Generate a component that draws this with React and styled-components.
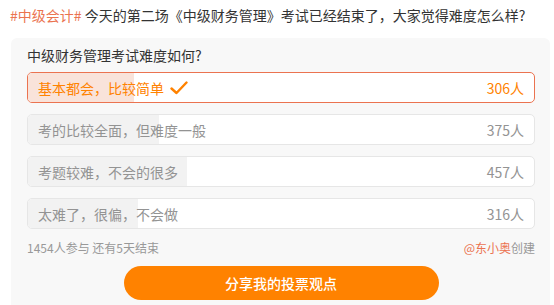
import React from 'react';
import styled, { createGlobalStyle } from 'styled-components';

const GlobalStyle = createGlobalStyle`
  html, body {
    margin: 0;
    padding: 0;
    background: #fff;
    font-family: "Noto Sans CJK SC", "Noto Sans", sans-serif;
  }
`;

const Page = styled.div`
  width: 554px;
  height: 305px;
  overflow: hidden;
  box-sizing: border-box;
  padding: 5px 0 0 10px;
`;

const Title = styled.p`
  margin: 0;
  font-size: 14px;
  line-height: 20px;
  color: #333;
`;

const Topic = styled.span`
  color: #eb7350;
`;

const Card = styled.div`
  margin: 13px 0 0 1px;
  width: 539px;
  box-sizing: border-box;
  background: #f8f8f8;
  border-radius: 6px 6px 0 0;
  padding: 7px 15px 20px 16px;
`;

const Question = styled.h4`
  margin: 0 0 7px;
  font-size: 14px;
  font-weight: normal;
  line-height: 20px;
  color: #333;
`;

const Option = styled.div`
  position: relative;
  height: 31px;
  box-sizing: border-box;
  margin-bottom: 11px;
  border: 1px solid ${({ $chosen }) => ($chosen ? '#eb7350' : '#e6e6e6')};
  border-radius: 5px;
  background: #fff;
  overflow: hidden;
  display: flex;
  align-items: center;
  justify-content: space-between;
  padding: 0 10px;
  font-size: 14px;
  color: ${({ $chosen }) => ($chosen ? '#ff8200' : '#939393')};
`;

const Fill = styled.div`
  position: absolute;
  left: 0;
  top: 0;
  bottom: 0;
  background: ${({ $chosen }) => ($chosen ? '#f9e3da' : '#f2f2f2')};
`;

const Label = styled.span`
  position: relative;
  display: flex;
  align-items: center;
  gap: 6px;
`;

const Count = styled.span`
  position: relative;
`;

const Footer = styled.div`
  display: flex;
  justify-content: space-between;
  margin-top: 8px;
  font-size: 12px;
  line-height: 16px;
  color: #999;
`;

const Author = styled.span`
  color: #eb7350;
`;

const ShareButton = styled.button`
  display: block;
  margin: 10px auto 0;
  width: 315px;
  height: 34px;
  border: none;
  border-radius: 17px;
  background: #ff8200;
  color: #fff;
  font-family: inherit;
  font-size: 14px;
  font-weight: 500;
  cursor: pointer;
`;

const Check = () => (
  <svg width="18" height="14" viewBox="0 0 18 14">
    <path d="M1.5 7.5 L6.5 12 L16.5 1.5" fill="none" stroke="#ff8200" strokeWidth="2.4" strokeLinecap="round" strokeLinejoin="round" />
  </svg>
);

const options = [
  { text: '基本都会，比较简单', count: 306, chosen: true },
  { text: '考的比较全面，但难度一般', count: 375 },
  { text: '考题较难，不会的很多', count: 457 },
  { text: '太难了，很偏，不会做', count: 316 },
];

const total = 1454;

export default function App() {
  return (
    <Page>
      <GlobalStyle />
      <Title>
        <Topic>#中级会计#</Topic> 今天的第二场《中级财务管理》考试已经结束了，大家觉得难度怎么样?
      </Title>
      <Card>
        <Question>中级财务管理考试难度如何?</Question>
        {options.map((o) => (
          <Option key={o.text} $chosen={o.chosen}>
            <Fill $chosen={o.chosen} style={{ width: `${(o.count / total) * 100}%` }} />
            <Label>
              {o.text}
              {o.chosen && <Check />}
            </Label>
            <Count>{o.count}人</Count>
          </Option>
        ))}
        <Footer>
          <span>{total}人参与 还有5天结束</span>
          <span><Author>@东小奥</Author>创建</span>
        </Footer>
        <ShareButton>分享我的投票观点</ShareButton>
      </Card>
    </Page>
  );
}
